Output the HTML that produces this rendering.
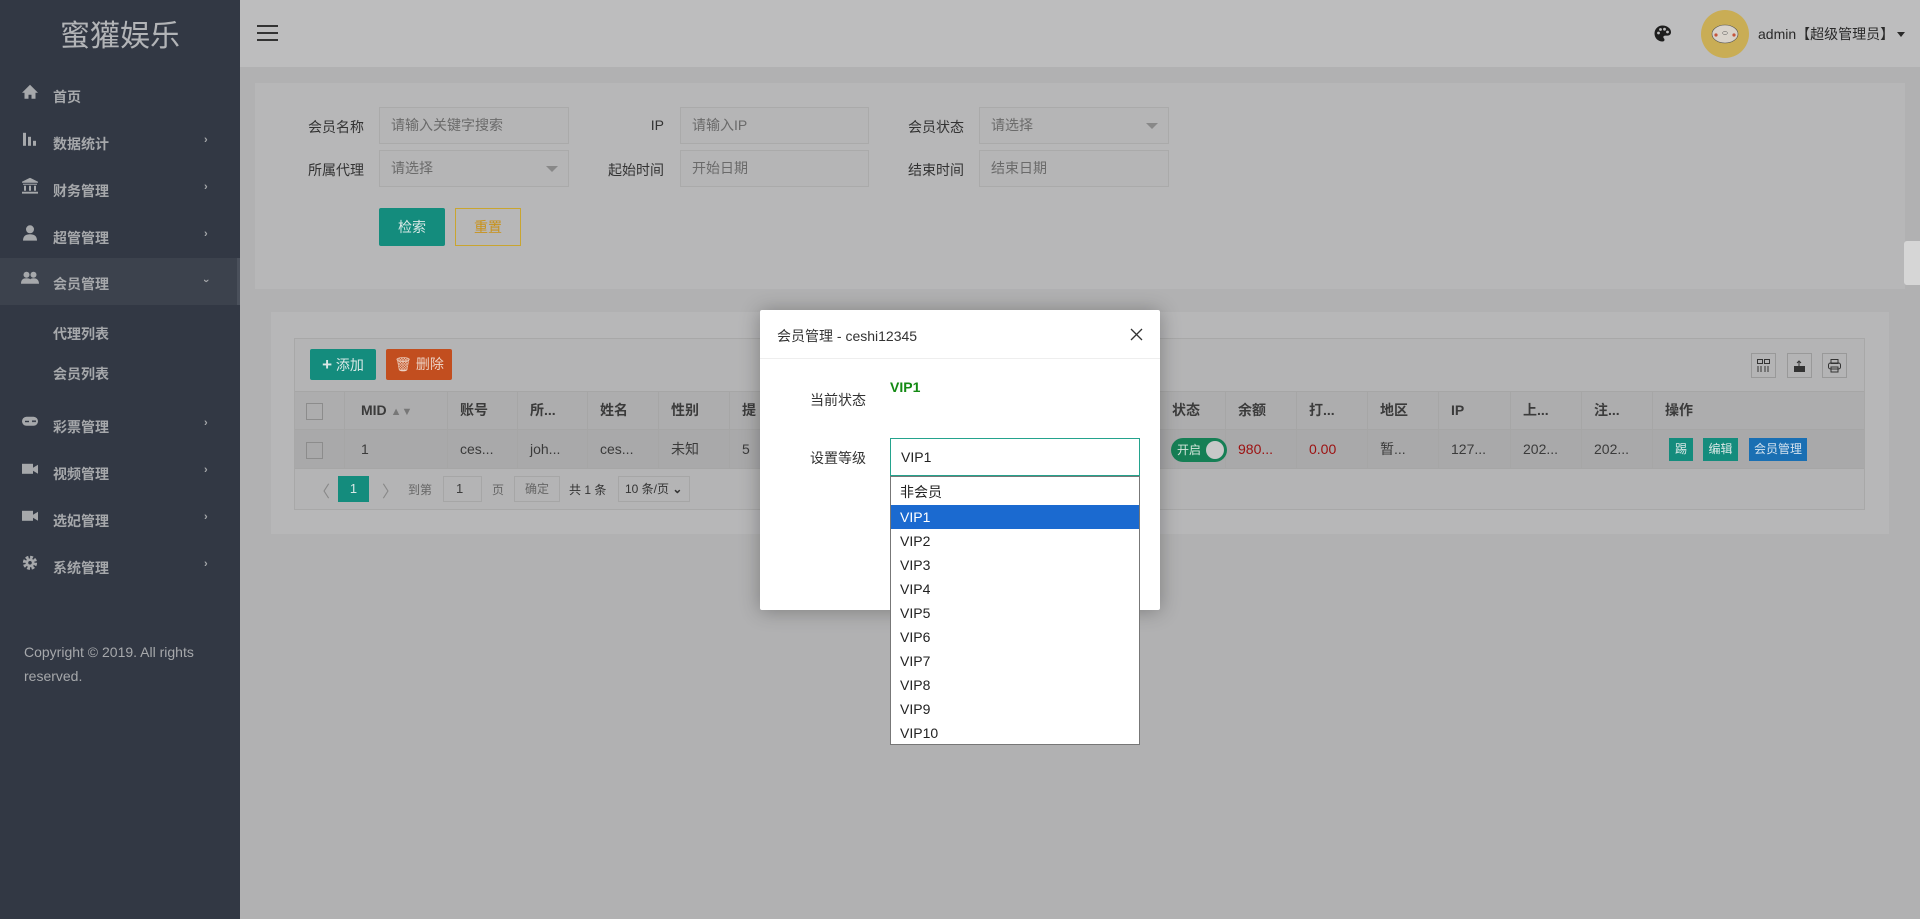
<!DOCTYPE html>
<html><head><meta charset="utf-8"><style>
*{box-sizing:border-box;margin:0;padding:0}
body{width:1920px;height:919px;overflow:hidden;background:#b1b1b2;font-family:"Liberation Sans","Noto Sans CJK SC",sans-serif;font-size:14px;color:#3d3d3d;position:relative}
.abs{position:absolute}
#side{left:0;top:0;width:240px;height:919px;background:#323844}
.logo{left:0;top:11px;width:240px;text-align:center;font-size:30px;color:#b2b4b7}
.mi{left:0;width:240px;height:47px;color:#a6a8ab;font-size:14px;font-weight:bold}
.mi .t{position:absolute;left:53px;top:50%;transform:translateY(-40%)}
.mi .ic{position:absolute;left:21px;top:50%;transform:translateY(-70%);width:18px;height:16px}
.mi .ar{position:absolute;left:204px;top:50%;transform:translateY(-65%);font-size:11px}
.sub{left:53px;color:#a6a8ab;font-weight:bold}
#hdr{left:240px;top:0;width:1680px;height:67px;background:#bdbdbe}
.card{background:#b7b7b8}
.lab{position:absolute;font-size:14px;color:#333;text-align:right;width:80px}
.inp{position:absolute;height:37px;border:1px solid #aaa;background:#b5b5b6;color:#6a6a6a;padding-left:11px;line-height:35px;font-size:14px}
.tri{position:absolute;right:10px;top:15px;border:6px solid transparent;border-top-color:#888}
.btn{position:absolute;color:#d9e8e6;text-align:center;font-size:14px}
.th,.td{position:absolute;height:39px;line-height:39px;padding-left:12px;border-right:1px solid #a6a6a6;color:#3b3b3b}
.opt{height:24px;line-height:24px;padding-left:9px;font-size:14px;color:#222}
</style></head><body>
<div id="side" class="abs">
<div class="abs logo">蜜獾娱乐</div>
<div class="abs mi" style="top:71px"><svg class="ic" viewBox="0 0 18 16"><path d="M9 1L1 9h2.5v6h4v-4h3v4h4V9H17z" fill="#a6a8ab"/></svg><span class="t">首页</span></div>
<div class="abs mi" style="top:118px"><svg class="ic" viewBox="0 0 18 16"><rect x="2" y="2" width="3" height="13" fill="#a6a8ab"/><rect x="7" y="6" width="3" height="9" fill="#a6a8ab"/><rect x="12" y="10" width="3" height="5" fill="#a6a8ab"/></svg><span class="t">数据统计</span><span class="ar">›</span></div>
<div class="abs mi" style="top:165px"><svg class="ic" viewBox="0 0 18 16"><path d="M9 0L1 4v1h16V4z M2 6h14v1H2z M3 8h2v5H3z M8 8h2v5H8z M13 8h2v5h-2z M1 14h16v2H1z" fill="#a6a8ab"/></svg><span class="t">财务管理</span><span class="ar">›</span></div>
<div class="abs mi" style="top:212px"><svg class="ic" viewBox="0 0 18 16"><circle cx="9" cy="4.5" r="4" fill="#a6a8ab"/><path d="M2 16c0-5 3-6.5 7-6.5s7 1.5 7 6.5z" fill="#a6a8ab"/></svg><span class="t">超管管理</span><span class="ar">›</span></div>
<div class="abs mi" style="top:258px;background:#3c424d"><div class="abs" style="right:0;top:0;width:3px;height:47px;background:#4a505b"></div><svg class="ic" viewBox="0 0 18 16"><circle cx="5.5" cy="4" r="3" fill="#a6a8ab"/><circle cx="12.5" cy="4" r="3" fill="#a6a8ab"/><path d="M0 13c0-4 2-5.5 5.5-5.5S11 9 11 13z M8 13c0-4 1.5-5.5 4.5-5.5S18 9 18 13z" fill="#a6a8ab"/></svg><span class="t">会员管理</span><span class="ar" style="transform:translateY(-60%) rotate(90deg)">›</span></div>
<div class="abs sub" style="top:324px">代理列表</div>
<div class="abs sub" style="top:364px">会员列表</div>
<div class="abs mi" style="top:401px"><svg class="ic" viewBox="0 0 18 16"><rect x="1" y="3" width="16" height="9" rx="4.5" fill="#a6a8ab"/><rect x="4" y="7" width="4" height="1.4" fill="#323844"/><circle cx="12" cy="7.5" r="1" fill="#323844"/><circle cx="14" cy="7.5" r="1" fill="#323844"/></svg><span class="t">彩票管理</span><span class="ar">›</span></div>
<div class="abs mi" style="top:448px"><svg class="ic" viewBox="0 0 18 16"><rect x="1" y="3" width="11" height="10" fill="#a6a8ab"/><path d="M12 7l5-3v9l-5-3z" fill="#a6a8ab"/></svg><span class="t">视频管理</span><span class="ar">›</span></div>
<div class="abs mi" style="top:495px"><svg class="ic" viewBox="0 0 18 16"><rect x="1" y="3" width="11" height="10" fill="#a6a8ab"/><path d="M12 7l5-3v9l-5-3z" fill="#a6a8ab"/></svg><span class="t">选妃管理</span><span class="ar">›</span></div>
<div class="abs mi" style="top:542px"><svg class="ic" viewBox="0 0 18 18"><circle cx="9" cy="9" r="6" fill="none" stroke="#a6a8ab" stroke-width="4" stroke-dasharray="3 1.7"/><circle cx="9" cy="9" r="5" fill="#a6a8ab"/><circle cx="9" cy="9" r="2" fill="#323844"/></svg><span class="t">系统管理</span><span class="ar">›</span></div>
<div class="abs" style="left:24px;top:640px;color:#a6a8ab;font-size:14px;line-height:24px;width:200px">Copyright © 2019. All rights reserved.</div>
</div>

<div id="hdr" class="abs">
<svg class="abs" style="left:17px;top:25px" width="21" height="16" viewBox="0 0 21 16"><rect y="0" width="21" height="2" fill="#333"/><rect y="7" width="21" height="2" fill="#333"/><rect y="14" width="21" height="2" fill="#333"/></svg>
<svg class="abs" style="left:1414px;top:25px" width="17" height="17" viewBox="0 0 17 17"><path d="M8.5 0.5C4 0.5 0.5 4 0.5 8.5s3.5 8 8 8c1.3 0 2-0.8 2-1.8 0-1.3-1.2-1.5-1.2-2.6 0-1 0.9-1.5 2-1.5h2.2c2.2 0 3.5-1.5 3.5-3.5C17 3.5 13 0.5 8.5 0.5z" fill="#1e1e1e"/><circle cx="4.5" cy="8" r="1.4" fill="#bdbdbe"/><circle cx="6.5" cy="4.5" r="1.4" fill="#bdbdbe"/><circle cx="10.5" cy="4.2" r="1.4" fill="#bdbdbe"/><circle cx="13.5" cy="7" r="1.4" fill="#bdbdbe"/></svg>
<div class="abs" style="left:1461px;top:10px;width:48px;height:48px;border-radius:50%;background:#c9ad55"></div>
<svg class="abs" style="left:1470px;top:22px" width="30" height="22" viewBox="0 0 30 22"><ellipse cx="15" cy="12" rx="13" ry="9" fill="#d9d3cb" stroke="#555" stroke-width="0.6"/><circle cx="6" cy="13" r="1.6" fill="#c5553d"/><circle cx="24" cy="13" r="1.6" fill="#c5553d"/><ellipse cx="15" cy="11" rx="2.5" ry="1.5" fill="none" stroke="#555" stroke-width="0.5"/></svg>
<div class="abs" style="left:1518px;top:24px;font-size:14px;color:#2a2a2a">admin【超级管理员】</div>
<div class="abs" style="left:1657px;top:32px;border:4px solid transparent;border-top:5px solid #2a2a2a"></div>
</div>

<div class="abs card" style="left:255px;top:83px;width:1650px;height:206px"></div>
<div class="lab" style="left:284px;top:117px">会员名称</div>
<div class="inp" style="left:379px;top:107px;width:190px">请输入关键字搜索</div>
<div class="lab" style="left:584px;top:117px">IP</div>
<div class="inp" style="left:680px;top:107px;width:189px">请输入IP</div>
<div class="lab" style="left:884px;top:117px">会员状态</div>
<div class="inp" style="left:979px;top:107px;width:190px">请选择<span class="tri"></span></div>
<div class="lab" style="left:284px;top:160px">所属代理</div>
<div class="inp" style="left:379px;top:150px;width:190px">请选择<span class="tri"></span></div>
<div class="lab" style="left:584px;top:160px">起始时间</div>
<div class="inp" style="left:680px;top:150px;width:189px">开始日期</div>
<div class="lab" style="left:884px;top:160px">结束时间</div>
<div class="inp" style="left:979px;top:150px;width:190px">结束日期</div>
<div class="btn" style="left:379px;top:208px;width:66px;height:38px;line-height:38px;background:#148c7d;border-radius:2px">检索</div>
<div class="btn" style="left:455px;top:208px;width:66px;height:38px;line-height:36px;border:1px solid #c9a530;color:#c8921a">重置</div>

<div class="abs card" style="left:271px;top:312px;width:1618px;height:222px"></div>
<div class="abs" style="left:294px;top:338px;width:1571px;height:172px;border:1px solid #a8a8a8;background:#b4b4b5"></div>
<div class="btn" style="left:310px;top:349px;width:66px;height:31px;line-height:31px;background:#148c7d;border-radius:2px"><b style="font-size:17px">+</b> 添加</div>
<div class="btn" style="left:386px;top:349px;width:66px;height:31px;line-height:31px;background:#c24e1f;border-radius:2px;color:#ecd2c4">🗑 删除</div>
<div class="abs" style="left:1751px;top:353px;width:25px;height:25px;border:1px solid #999"></div>
<div class="abs" style="left:1787px;top:353px;width:25px;height:25px;border:1px solid #999"></div>
<div class="abs" style="left:1822px;top:353px;width:25px;height:25px;border:1px solid #999"></div>
<svg class="abs" style="left:1757px;top:359px" width="13" height="13" viewBox="0 0 13 13"><rect x="0.5" y="0.5" width="5" height="4" fill="none" stroke="#333"/><rect x="7.5" y="0.5" width="5" height="4" fill="none" stroke="#333"/><path d="M1 7v6M4 7v6M8 7v6M11 7v6" stroke="#333"/></svg>
<svg class="abs" style="left:1793px;top:359px" width="13" height="13" viewBox="0 0 13 13"><rect x="1" y="7" width="11" height="6" fill="#333"/><path d="M6 7V2M4 4l2-2 2 2" stroke="#333" fill="none"/></svg>
<svg class="abs" style="left:1828px;top:359px" width="13" height="14" viewBox="0 0 13 14"><rect x="3" y="0.5" width="7" height="4" fill="none" stroke="#333"/><rect x="0.5" y="4" width="12" height="6" rx="2" fill="none" stroke="#333"/><rect x="3" y="8" width="7" height="5" fill="none" stroke="#333"/></svg>
<div class="abs" style="left:295px;top:391px;width:1569px;height:39px;background:#adadae;border-top:1px solid #a6a6a6;border-bottom:1px solid #a6a6a6"></div>
<div class="abs" style="left:295px;top:430px;width:1569px;height:39px;background:#a9a9aa;border-bottom:1px solid #a6a6a6"></div>
<div class="th" style="left:295px;top:391px;width:50px;font-weight:bold"><span style="display:inline-block;width:17px;height:17px;border:1px solid #8c8c8c;vertical-align:middle;margin-left:-1px"></span></div>
<div class="th" style="left:345px;top:391px;width:103px;font-weight:bold;padding-left:16px">MID <span style="color:#777;font-size:11px">▲▼</span></div>
<div class="th" style="left:448px;top:391px;width:70px;font-weight:bold">账号</div>
<div class="th" style="left:518px;top:391px;width:70px;font-weight:bold">所...</div>
<div class="th" style="left:588px;top:391px;width:71px;font-weight:bold">姓名</div>
<div class="th" style="left:659px;top:391px;width:71px;font-weight:bold">性别</div>
<div class="th" style="left:730px;top:391px;width:40px;font-weight:bold">提</div>
<div class="th" style="left:1157px;top:391px;width:69px;font-weight:bold;padding-left:15px">状态</div>
<div class="th" style="left:1226px;top:391px;width:71px;font-weight:bold">余额</div>
<div class="th" style="left:1297px;top:391px;width:71px;font-weight:bold">打...</div>
<div class="th" style="left:1368px;top:391px;width:71px;font-weight:bold">地区</div>
<div class="th" style="left:1439px;top:391px;width:72px;font-weight:bold">IP</div>
<div class="th" style="left:1511px;top:391px;width:71px;font-weight:bold">上...</div>
<div class="th" style="left:1582px;top:391px;width:71px;font-weight:bold">注...</div>
<div class="th" style="left:1653px;top:391px;width:211px;font-weight:bold;border-right:none">操作</div>
<div class="td" style="left:295px;top:430px;width:50px"><span style="display:inline-block;width:17px;height:17px;border:1px solid #8c8c8c;vertical-align:middle;margin-left:-1px"></span></div>
<div class="td" style="left:345px;top:430px;width:103px;padding-left:16px">1</div>
<div class="td" style="left:448px;top:430px;width:70px">ces...</div>
<div class="td" style="left:518px;top:430px;width:70px">joh...</div>
<div class="td" style="left:588px;top:430px;width:71px">ces...</div>
<div class="td" style="left:659px;top:430px;width:71px">未知</div>
<div class="td" style="left:730px;top:430px;width:40px">5</div>
<div class="td" style="left:1157px;top:430px;width:69px;padding-left:14px"><span style="display:inline-block;width:56px;height:24px;border-radius:12px;background:#167f55;vertical-align:middle;position:relative;color:#d6e6dc;font-size:12px;line-height:24px;padding-left:6px">开启<i style="position:absolute;right:3px;top:3px;width:18px;height:18px;border-radius:50%;background:#c8c8c8"></i></span></div>
<div class="td" style="left:1226px;top:430px;width:71px;color:#9c1010">980...</div>
<div class="td" style="left:1297px;top:430px;width:71px;color:#9c1010">0.00</div>
<div class="td" style="left:1368px;top:430px;width:71px">暂...</div>
<div class="td" style="left:1439px;top:430px;width:72px">127...</div>
<div class="td" style="left:1511px;top:430px;width:71px">202...</div>
<div class="td" style="left:1582px;top:430px;width:71px">202...</div>
<div class="btn" style="left:1669px;top:438px;width:24px;height:23px;line-height:23px;background:#148c7d;font-size:12px">踢</div>
<div class="btn" style="left:1703px;top:438px;width:35px;height:23px;line-height:23px;background:#148c7d;font-size:12px">编辑</div>
<div class="btn" style="left:1749px;top:438px;width:58px;height:23px;line-height:23px;background:#1a6fb3;font-size:12px;color:#d4e2ee">会员管理</div>
<div class="abs" style="left:314px;top:478px;color:#888;font-size:16px">〈</div>
<div class="abs" style="left:338px;top:476px;width:31px;height:26px;line-height:26px;text-align:center;background:#148c7d;color:#d9e8e6;font-size:13px">1</div>
<div class="abs" style="left:382px;top:478px;color:#888;font-size:16px">〉</div>
<div class="abs" style="left:408px;top:481px;color:#666;font-size:12px">到第</div>
<div class="abs" style="left:443px;top:476px;width:39px;height:26px;border:1px solid #a6a6a6;line-height:24px;padding-left:12px;font-size:13px">1</div>
<div class="abs" style="left:492px;top:481px;color:#666;font-size:12px">页</div>
<div class="abs" style="left:514px;top:476px;width:46px;height:26px;border:1px solid #a6a6a6;line-height:24px;text-align:center;font-size:12px;color:#666">确定</div>
<div class="abs" style="left:569px;top:481px;color:#333;font-size:12px">共 1 条</div>
<div class="abs" style="left:618px;top:476px;width:72px;height:26px;border:1px solid #a6a6a6;line-height:24px;padding-left:6px;font-size:12px;color:#333">10 条/页 <b>⌄</b></div>
<div class="abs" style="left:1904px;top:241px;width:16px;height:44px;background:#d6d6d6;border-radius:3px 0 0 3px"></div>

<div class="abs" style="left:760px;top:310px;width:400px;height:300px;background:#fff;box-shadow:0 1px 20px rgba(0,0,0,.3);border-radius:2px">
<div class="abs" style="left:0;top:0;width:400px;height:49px;border-bottom:1px solid #eee"></div>
<div class="abs" style="left:17px;top:16px;font-size:14px;color:#333">会员管理 - ceshi12345</div>
<svg class="abs" style="left:370px;top:18px" width="13" height="13" viewBox="0 0 13 13"><path d="M1 1l11 11M12 1L1 12" stroke="#333" stroke-width="1.3"/></svg>
<div class="abs" style="left:50px;top:80px;font-size:14px;color:#333">当前状态</div>
<div class="abs" style="left:130px;top:69px;font-size:14px;color:#148a14;font-weight:bold">VIP1</div>
<div class="abs" style="left:50px;top:138px;font-size:14px;color:#333">设置等级</div>
<div class="abs" style="left:130px;top:128px;width:250px;height:38px;border:1px solid #24a38d;line-height:36px;padding-left:10px;font-size:14px;color:#222">VIP1</div>
</div>
<div class="abs" style="left:890px;top:476px;width:250px;height:269px;background:#fff;border:1px solid #777;padding-top:3px">
<div class="opt" style="height:25px;line-height:25px">非会员</div>
<div class="opt" style="background:#1b6ad0;color:#fff">VIP1</div>
<div class="opt">VIP2</div><div class="opt">VIP3</div><div class="opt">VIP4</div><div class="opt">VIP5</div><div class="opt">VIP6</div><div class="opt">VIP7</div><div class="opt">VIP8</div><div class="opt">VIP9</div><div class="opt">VIP10</div>
</div>
</body></html>
